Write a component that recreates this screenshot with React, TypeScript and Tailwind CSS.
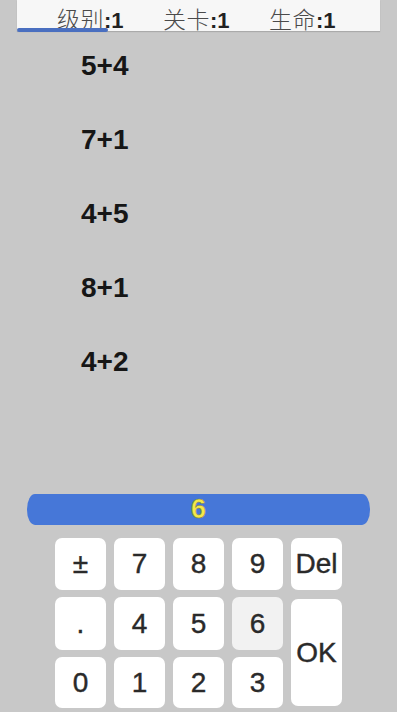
import React from 'react';

const problems = ['5+4', '7+1', '4+5', '8+1', '4+2'];

type Key = { label: string; area: string; pressed?: boolean };

const keys: Key[] = [
    { label: '±', area: 'col-start-1 row-start-1' },
    { label: '7', area: 'col-start-2 row-start-1' },
    { label: '8', area: 'col-start-3 row-start-1' },
    { label: '9', area: 'col-start-4 row-start-1' },
    { label: 'Del', area: 'col-start-5 row-start-1' },
    { label: '.', area: 'col-start-1 row-start-2' },
    { label: '4', area: 'col-start-2 row-start-2' },
    { label: '5', area: 'col-start-3 row-start-2' },
    { label: '6', area: 'col-start-4 row-start-2', pressed: true },
    { label: 'OK', area: 'col-start-5 row-start-2 row-span-2 my-[2px]' },
    { label: '0', area: 'col-start-1 row-start-3' },
    { label: '1', area: 'col-start-2 row-start-3' },
    { label: '2', area: 'col-start-3 row-start-3' },
    { label: '3', area: 'col-start-4 row-start-3' },
];

const Stat = ({ name, value }: { name: string; value: number }) => (
    <span className="flex items-baseline w-[106px] leading-normal">
        <span className="text-[23px] text-[#4a4a4a] font-light tracking-[0.5px]" style={{ fontFamily: '"Noto Sans CJK SC", sans-serif' }}>{name}</span>
        <span className="text-[22px] font-bold text-[#222]">:{value}</span>
    </span>
);

export default function App() {
    return (
        <div
            className="w-[397px] h-[712px] bg-[#c8c8c8] flex flex-col overflow-hidden"
            style={{ fontFamily: '"Liberation Sans", Arial, sans-serif' }}
        >
            {/* status bar */}
            <div className="relative mx-[17px] h-[31px] bg-[#f7f7f7] shadow-[0_1px_1px_rgba(0,0,0,0.15)] flex items-start">
                <div className="flex pl-[40px] pt-[1px] h-[31px]">
                    <Stat name="级别" value={1} />
                    <Stat name="关卡" value={1} />
                    <Stat name="生命" value={1} />
                </div>
                <div className="absolute left-0 bottom-[-1px] w-[91px] h-[4px] rounded-full bg-[#4a6fc0]" />
            </div>

            {/* problems */}
            <div className="flex flex-col pl-[81px] pt-[21px] gap-[46px] text-[28px] font-bold text-[#161616] leading-[28px]">
                {problems.map((p, i) => (
                    <div key={i}>{p}</div>
                ))}
            </div>

            {/* answer bar */}
            <div className="mt-[118px] mx-[27px] h-[31px] bg-[#4677d8] rounded-[8px/15px] flex items-center justify-center">
                <span className="text-[#f4e94a] font-bold text-[27px] leading-none [-webkit-text-stroke:0.6px_#8a8a30]">6</span>
            </div>

            {/* keypad */}
            <div className="mt-[13px] ml-[55px] grid grid-cols-[repeat(5,51px)] grid-rows-[52px_53px_51px] gap-x-[8px] gap-y-[7px]">
                {keys.map(k => (
                    <div
                        key={k.label}
                        className={`${k.area} ${k.pressed ? 'bg-[#f2f2f2]' : 'bg-white'} rounded-[7px] flex items-center justify-center text-[28px] text-[#2a2a2a] [-webkit-text-stroke:0.4px_#2a2a2a]`}
                    >
                        {k.label}
                    </div>
                ))}
            </div>
        </div>
    );
}
